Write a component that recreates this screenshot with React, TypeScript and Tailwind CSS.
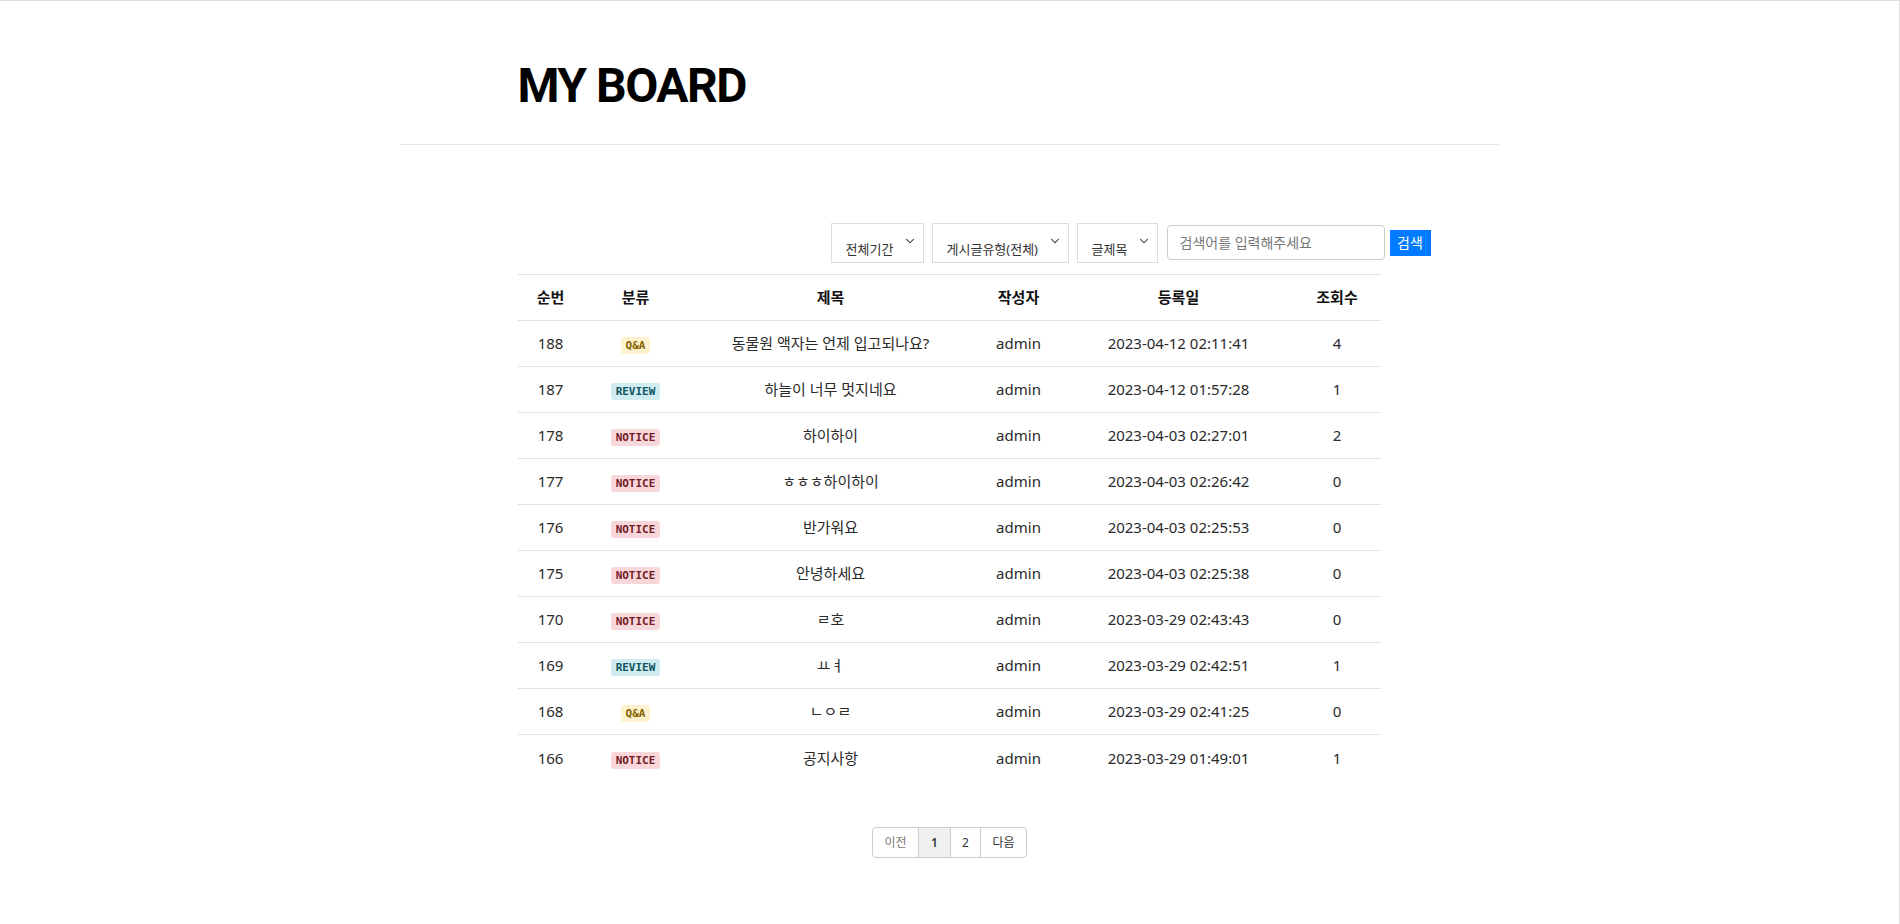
import React from 'react';
import { ChevronDown } from 'lucide-react';

type Post = {
  no: number;
  kind: 'QNA' | 'REVIEW' | 'NOTICE';
  title: string;
  writer: string;
  date: string;
  views: number;
};

const posts: Post[] = [
  { no: 188, kind: 'QNA', title: '동물원 액자는 언제 입고되나요?', writer: 'admin', date: '2023-04-12 02:11:41', views: 4 },
  { no: 187, kind: 'REVIEW', title: '하늘이 너무 멋지네요', writer: 'admin', date: '2023-04-12 01:57:28', views: 1 },
  { no: 178, kind: 'NOTICE', title: '하이하이', writer: 'admin', date: '2023-04-03 02:27:01', views: 2 },
  { no: 177, kind: 'NOTICE', title: 'ㅎㅎㅎ하이하이', writer: 'admin', date: '2023-04-03 02:26:42', views: 0 },
  { no: 176, kind: 'NOTICE', title: '반가워요', writer: 'admin', date: '2023-04-03 02:25:53', views: 0 },
  { no: 175, kind: 'NOTICE', title: '안녕하세요', writer: 'admin', date: '2023-04-03 02:25:38', views: 0 },
  { no: 170, kind: 'NOTICE', title: 'ㄹ호', writer: 'admin', date: '2023-03-29 02:43:43', views: 0 },
  { no: 169, kind: 'REVIEW', title: 'ㅛㅕ', writer: 'admin', date: '2023-03-29 02:42:51', views: 1 },
  { no: 168, kind: 'QNA', title: 'ㄴㅇㄹ', writer: 'admin', date: '2023-03-29 02:41:25', views: 0 },
  { no: 166, kind: 'NOTICE', title: '공지사항', writer: 'admin', date: '2023-03-29 01:49:01', views: 1 },
];

function Badge({ kind }: { kind: Post['kind'] }) {
  if (kind === 'QNA') {
    return (
      <span className="inline-block rounded-[3px] bg-[#fff3cd] px-[5px] text-[11px] leading-[17px] font-bold text-[#856404] [font-family:'DejaVu_Sans_Mono',monospace]">
        Q&amp;A
      </span>
    );
  }
  if (kind === 'REVIEW') {
    return (
      <span className="inline-block rounded-[3px] bg-[#d1ecf1] px-[5px] text-[11px] leading-[17px] font-bold text-[#0c5460] [font-family:'DejaVu_Sans_Mono',monospace]">
        REVIEW
      </span>
    );
  }
  return (
    <span className="inline-block rounded-[3px] bg-[#f8d7da] px-[5px] text-[11px] leading-[17px] font-bold text-[#721c24] [font-family:'DejaVu_Sans_Mono',monospace]">
      NOTICE
    </span>
  );
}

function SelectBox({ label, width }: { label: string; width: string }) {
  return (
    <div className={`flex h-[40px] shrink-0 items-start justify-between border border-[#dddddd] bg-white pl-[14px] pr-[6px] ${width}`}>
      <span className="mt-[16px] text-[13px] leading-[18px] text-[#333]">{label}</span>
      <ChevronDown size={14} strokeWidth={1.8} className="mt-[10px] text-[#222]" />
    </div>
  );
}

export default function App() {
  return (
    <div className="min-h-[924px] border-t border-r border-[#dddddd] bg-white [font-family:'Noto_Sans','Noto_Sans_CJK_KR',sans-serif]">
      <div className="mx-auto w-[1098px]">
        {/* Header */}
        <header className="h-[144px] border-b border-[#e5e5e5] pl-[117px] pt-[61px]">
          <h1 className="text-[48px] leading-[48px] font-bold tracking-[-1.5px] text-black [font-family:Roboto,'Liberation_Sans',sans-serif]">
            MY BOARD
          </h1>
        </header>

        {/* Filters */}
        <div className="mt-[78px] flex items-start pl-[430px]">
          <SelectBox label="전체기간" width="w-[93px]" />
          <div className="ml-[8px]">
            <SelectBox label="게시글유형(전체)" width="w-[137px]" />
          </div>
          <div className="ml-[8px]">
            <SelectBox label="글제목" width="w-[81px]" />
          </div>
          <input
            placeholder="검색어를 입력해주세요"
            className="mt-[2px] ml-[9px] h-[35px] w-[218px] rounded-[4px] border border-[#cccccc] px-[12px] text-[14px] text-[#333] placeholder:text-[#777] outline-none"
          />
          <button className="mt-[7px] ml-[5px] h-[26px] w-[41px] bg-[#007bff] text-[14px] leading-[26px] text-white">
            검색
          </button>
        </div>

        {/* Table */}
        <table className="mt-[11px] ml-[117px] w-[863px] table-fixed border-collapse text-[15px] text-[#2a2a2a]">
          <colgroup>
            <col className="w-[66px]" />
            <col className="w-[104px]" />
            <col className="w-[286px]" />
            <col className="w-[90px]" />
            <col className="w-[230px]" />
            <col className="w-[87px]" />
          </colgroup>
          <thead>
            <tr className="h-[46px] border-t border-b border-[#dee2e6]">
              <th className="font-bold text-[#111]">순번</th>
              <th className="font-bold text-[#111]">분류</th>
              <th className="font-bold text-[#111]">제목</th>
              <th className="font-bold text-[#111]">작성자</th>
              <th className="font-bold text-[#111]">등록일</th>
              <th className="font-bold text-[#111]">조회수</th>
            </tr>
          </thead>
          <tbody>
            {posts.map((p, i) => (
              <tr
                key={p.no}
                className={`h-[46px] text-center ${i < posts.length - 1 ? 'border-b border-[#dee2e6]' : ''}`}
              >
                <td>{p.no}</td>
                <td>
                  <Badge kind={p.kind} />
                </td>
                <td>{p.title}</td>
                <td>{p.writer}</td>
                <td>{p.date}</td>
                <td>{p.views}</td>
              </tr>
            ))}
          </tbody>
        </table>

        {/* Pagination */}
        <div className="mt-[46px] flex justify-center">
          <div className="flex h-[31px] overflow-hidden rounded-[4px] border border-[#cccccc] text-[12px] leading-[29px]">
            <button className="w-[45px] text-[#777]">이전</button>
            <button className="w-[32px] border-l border-[#cccccc] bg-[#f0f0f0] font-semibold text-[#333]">1</button>
            <button className="w-[30px] border-l border-[#cccccc] text-[#333]">2</button>
            <button className="w-[46px] border-l border-[#cccccc] text-[#333]">다음</button>
          </div>
        </div>
      </div>
    </div>
  );
}
